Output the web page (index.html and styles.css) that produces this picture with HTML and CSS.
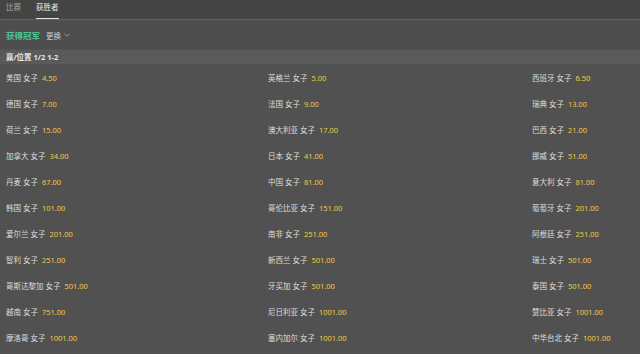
FILE: index.html
```html
<!DOCTYPE html>
<html lang="zh">
<head>
<meta charset="utf-8">
<link rel="stylesheet" href="styles.css">
</head>
<body>
<div class="topbar">
  <div class="tab">比赛</div>
  <div class="tab active">获胜者</div>
</div>
<div class="subhead">
  <span class="title">获得冠军</span>
  <span class="change">更换 <svg class="chev" width="6" height="4" viewBox="0 0 6 4"><path d="M0.5 0.8 L3 3.2 L5.5 0.8" fill="none" stroke="#9a9a9a" stroke-width="0.9"/></svg></span>
</div>
<div class="band">赢/位置 1/2 1-2</div>
<div class="grid">
  <div class="item">美国 女子 <span class="odd">4.50</span></div>
  <div class="item">英格兰 女子 <span class="odd">5.00</span></div>
  <div class="item">西班牙 女子 <span class="odd">6.50</span></div>
  <div class="item">德国 女子 <span class="odd">7.00</span></div>
  <div class="item">法国 女子 <span class="odd">9.00</span></div>
  <div class="item">瑞典 女子 <span class="odd">13.00</span></div>
  <div class="item">荷兰 女子 <span class="odd">15.00</span></div>
  <div class="item">澳大利亚 女子 <span class="odd">17.00</span></div>
  <div class="item">巴西 女子 <span class="odd">21.00</span></div>
  <div class="item">加拿大 女子 <span class="odd">34.00</span></div>
  <div class="item">日本 女子 <span class="odd">41.00</span></div>
  <div class="item">挪威 女子 <span class="odd">51.00</span></div>
  <div class="item">丹麦 女子 <span class="odd">67.00</span></div>
  <div class="item">中国 女子 <span class="odd">81.00</span></div>
  <div class="item">意大利 女子 <span class="odd">81.00</span></div>
  <div class="item">韩国 女子 <span class="odd">101.00</span></div>
  <div class="item">哥伦比亚 女子 <span class="odd">151.00</span></div>
  <div class="item">葡萄牙 女子 <span class="odd">201.00</span></div>
  <div class="item">爱尔兰 女子 <span class="odd">201.00</span></div>
  <div class="item">南非 女子 <span class="odd">251.00</span></div>
  <div class="item">阿根廷 女子 <span class="odd">251.00</span></div>
  <div class="item">智利 女子 <span class="odd">251.00</span></div>
  <div class="item">新西兰 女子 <span class="odd">501.00</span></div>
  <div class="item">瑞士 女子 <span class="odd">501.00</span></div>
  <div class="item">哥斯达黎加 女子 <span class="odd">501.00</span></div>
  <div class="item">牙买加 女子 <span class="odd">501.00</span></div>
  <div class="item">泰国 女子 <span class="odd">501.00</span></div>
  <div class="item">越南 女子 <span class="odd">751.00</span></div>
  <div class="item">尼日利亚 女子 <span class="odd">1001.00</span></div>
  <div class="item">赞比亚 女子 <span class="odd">1001.00</span></div>
  <div class="item">摩洛哥 女子 <span class="odd">1001.00</span></div>
  <div class="item">塞内加尔 女子 <span class="odd">1001.00</span></div>
  <div class="item">中华台北 女子 <span class="odd">1001.00</span></div>
</div>
</body>
</html>
```
FILE: styles.css
```css
html, body {
  margin: 0;
  padding: 0;
}
body {
  background: #515151;
  color: #dcdcdc;
  font-family: "Noto Sans", "Noto Sans CJK SC", sans-serif;
  font-size: 7.5px;
  width: 640px;
  height: 354px;
  overflow: hidden;
}
.topbar {
  height: 19px;
  background: #444444;
  border-bottom: 1px solid #4b6e61;
  display: flex;
  padding-left: 6px;
  gap: 15px;
}
.tab {
  color: #a8a8a8;
  line-height: 15px;
  height: 19px;
  box-sizing: border-box;
}
.tab.active {
  color: #e8e8e8;
  position: relative;
}
.tab.active::after {
  content: "";
  position: absolute;
  left: 0;
  right: 0;
  bottom: 0;
  height: 1.5px;
  background: #e6e6e6;
}
.subhead {
  height: 29px;
  background: #4e4e4e;
  display: flex;
  align-items: center;
  padding-left: 6px;
  gap: 6px;
}
.title {
  color: #4cc592;
  font-weight: 700;
  font-size: 8.5px;
  padding-top: 1px;
}
.change {
  color: #cfcfcf;
  display: flex;
  align-items: center;
  gap: 3px;
  padding-top: 1px;
}
.band {
  margin-top: 1px;
  height: 14px;
  line-height: 14px;
  background: #5a5a5a;
  padding-left: 6px;
  color: #e6e6e6;
  font-weight: 700;
}
.grid {
  display: grid;
  grid-template-columns: 262px 264px 1fr;
  grid-auto-rows: 26px;
  padding-left: 6px;
  padding-top: 1px;
}
.item {
  line-height: 26px;
  white-space: nowrap;
  color: #dedede;
}
.odd {
  color: #f0c94a;
  margin-left: 2px;
}
```
